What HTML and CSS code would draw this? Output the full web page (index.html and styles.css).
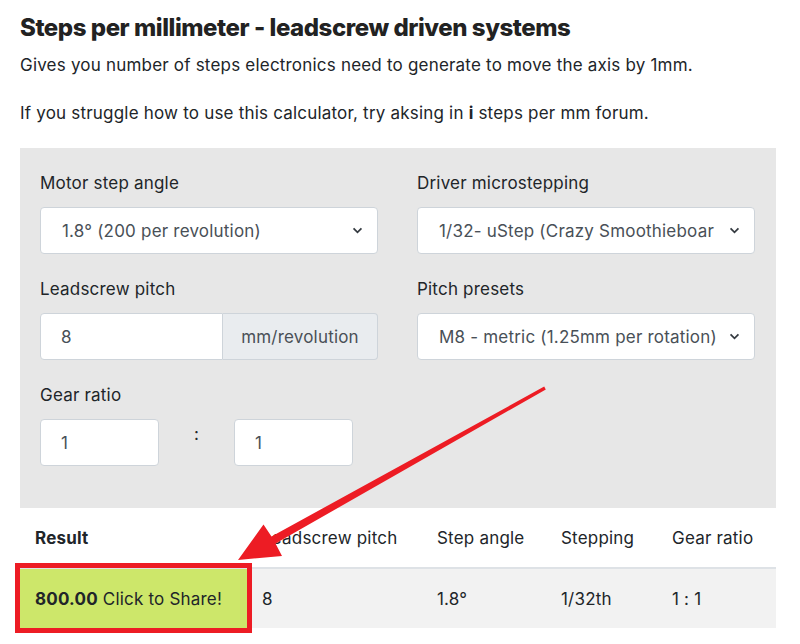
FILE: index.html
```html
<!DOCTYPE html>
<html>
<head>
<meta charset="utf-8">
<link rel="stylesheet" href="styles.css">
</head>
<body>
<div class="page">
  <h1 class="title">Steps per millimeter - leadscrew driven systems</h1>
  <p class="lead">Gives you number of steps electronics need to generate to move the axis by 1mm.</p>
  <p class="lead">If you struggle how to use this calculator, try aksing in <b>i</b> steps per mm forum.</p>

  <div class="panel">
    <div class="grid">
      <div class="field">
        <label class="label">Motor step angle</label>
        <div class="select"><span>1.8° (200 per revolution)</span><svg class="chev" viewBox="0 0 12 8" width="11" height="7"><path d="M1.5 1.5 L6 6 L10.5 1.5" fill="none" stroke="#343a40" stroke-width="2"/></svg></div>
      </div>
      <div class="field">
        <label class="label">Driver microstepping</label>
        <div class="select"><span>1/32- uStep (Crazy Smoothieboar</span><svg class="chev" viewBox="0 0 12 8" width="11" height="7"><path d="M1.5 1.5 L6 6 L10.5 1.5" fill="none" stroke="#343a40" stroke-width="2"/></svg></div>
      </div>
      <div class="field">
        <label class="label">Leadscrew pitch</label>
        <div class="group">
          <div class="input grow">8</div>
          <div class="addon">mm/revolution</div>
        </div>
      </div>
      <div class="field">
        <label class="label">Pitch presets</label>
        <div class="select tall"><span>M8 - metric (1.25mm per rotation)</span><svg class="chev" viewBox="0 0 12 8" width="11" height="7"><path d="M1.5 1.5 L6 6 L10.5 1.5" fill="none" stroke="#343a40" stroke-width="2"/></svg></div>
      </div>
      <div class="field">
        <label class="label">Gear ratio</label>
        <div class="ratio">
          <div class="input small">1</div>
          <div class="colon">:</div>
          <div class="input small">1</div>
        </div>
      </div>
    </div>
  </div>

  <table class="results">
    <thead>
      <tr>
        <th class="c1 strong">Result</th>
        <th class="c2">Leadscrew pitch</th>
        <th class="c3">Step angle</th>
        <th class="c4">Stepping</th>
        <th class="c5">Gear ratio</th>
      </tr>
    </thead>
    <tbody>
      <tr>
        <td class="c1 share"><b>800.00</b> Click to Share!</td>
        <td>8</td>
        <td>1.8°</td>
        <td>1/32th</td>
        <td>1 : 1</td>
      </tr>
    </tbody>
  </table>
</div>

<svg class="arrow" width="800" height="644" viewBox="0 0 800 644">
  <polygon fill="#ed1c24" points="545.8,389.4 544.2,386.6 271.5,536.5 263.5,524.5 238,560 282,556 275.5,543.5"/>
</svg>
</body>
</html>
```

FILE: styles.css
```css
html, body {
  margin: 0;
  padding: 0;
  background: #fff;
}
body {
  font-family: Inter, "Liberation Sans", Arial, sans-serif;
  color: #212529;
  letter-spacing: 0.2px;
  position: relative;
  width: 800px;
  height: 644px;
  overflow: hidden;
}
.page {
  padding: 0 24px 0 20px;
}
.title {
  font-size: 24px;
  font-weight: 800;
  color: #222;
  margin: 0;
  padding-top: 13px;
  line-height: 30px;
  letter-spacing: -0.45px;
}
.lead {
  font-size: 17px;
  line-height: 26px;
  margin: 9px 0 0 0;
}
.lead + .lead {
  margin-top: 22px;
}
.panel {
  margin-top: 22px;
  background: #e7e7e7;
  padding: 22px 21px 42px 20px;
}
.grid {
  display: grid;
  grid-template-columns: 338px 338px;
  column-gap: 39px;
  row-gap: 22px;
}
.field {
  display: flex;
  flex-direction: column;
}
.label {
  font-size: 17px;
  line-height: 26px;
  margin-bottom: 11px;
}
.select {
  height: 47px;
  box-sizing: border-box;
  background: #fff;
  border: 1px solid #ced4da;
  border-radius: 4px;
  display: flex;
  align-items: center;
  justify-content: space-between;
  padding: 0 14px 0 21px;
  font-size: 17px;
  color: #495057;
  white-space: nowrap;
  overflow: hidden;
}
.chev { flex: none; margin-left: 8px; }
.group {
  display: flex;
  height: 47px;
}
.input {
  box-sizing: border-box;
  background: #fff;
  border: 1px solid #ced4da;
  border-radius: 4px;
  display: flex;
  align-items: center;
  padding: 0 20px;
  font-size: 17px;
  color: #495057;
}
.grow {
  width: 183px;
  border-radius: 4px 0 0 4px;
}
.addon {
  flex: 1;
  box-sizing: border-box;
  background: #e9ecef;
  border: 1px solid #ced4da;
  border-left: none;
  border-radius: 0 4px 4px 0;
  display: flex;
  align-items: center;
  justify-content: center;
  font-size: 17px;
  color: #495057;
}
.ratio {
  display: flex;
  align-items: flex-start;
}
.input.small {
  width: 119px;
  height: 47px;
}
.colon {
  width: 75px;
  text-align: center;
  font-size: 17px;
  line-height: 20px;
  padding-top: 5px;
  color: #212529;
}
.results {
  width: 756px;
  border-collapse: collapse;
  font-size: 17px;
}
.results th, .results td {
  text-align: left;
  font-weight: normal;
  padding: 0 15px;
  height: 60px;
  box-sizing: border-box;
}
.results th.strong { font-weight: bold; }
.results thead th {
  border-bottom: 2px solid #dee2e6;
}
.results tbody tr {
  background: #f2f2f2;
}
.c1 { width: 227px; }
.c2 { width: 175px; }
.c3 { width: 124px; }
.c4 { width: 111px; }
.share {
  background: #cde76a;
  outline: 5px solid #ed1c24;
  white-space: nowrap;
}
.arrow {
  position: absolute;
  left: 0;
  top: 0;
  pointer-events: none;
}
```
